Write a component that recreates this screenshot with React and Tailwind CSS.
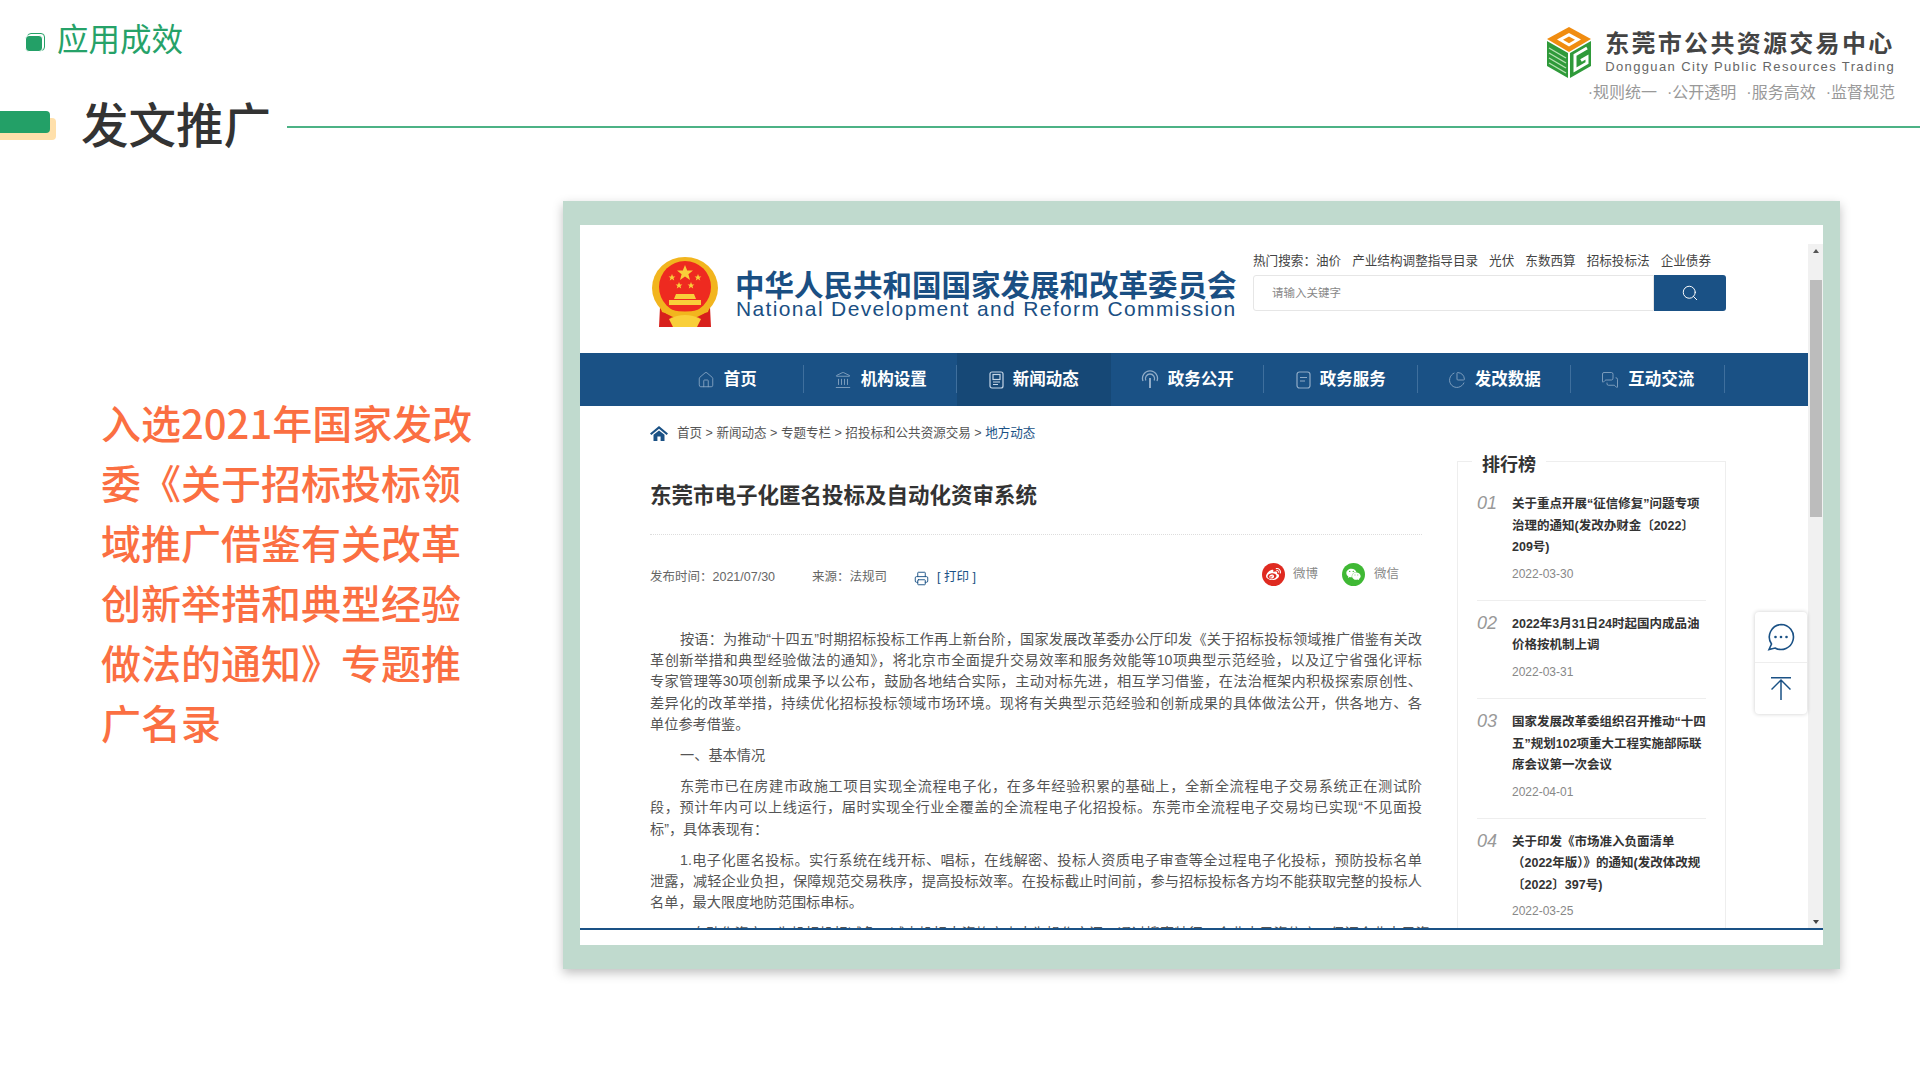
import React from "react";
import { House, Landmark, Printer, Search, PieChart, MessagesSquare } from "lucide-react";
import { FaWeibo, FaWeixin } from "react-icons/fa";

const sans = { fontFamily: '"Liberation Sans", "Noto Sans CJK SC", sans-serif' };
const cjk = { fontFamily: '"Noto Sans CJK SC", sans-serif' };

function CubeLogo() {
  return (
    <svg width="46" height="53" viewBox="0 0 46 53" className="shrink-0">
      <polygon points="23,1 45,13 23,26 1,13" fill="#f08c10" />
      <polygon points="23,7 35,13.5 23,20.5 11,13.5" fill="#fff" />
      <polygon points="23,10.5 29,13.8 23,17.2 17,13.8" fill="#f08c10" />
      <polygon points="1,15 22,27 22,52 1,40" fill="#2f9a3a" />
      <polygon points="45,15 24,27 24,52 45,40" fill="#2f9a3a" />
      <path d="M3 22 L20 32 M3 27 L20 37 M3 32 L20 42 M3 37 L20 47" stroke="#b9e0b4" strokeWidth="1.4" />
      <path d="M41 22 L29 29 V44 L41 37 V31 L35 34.5" fill="none" stroke="#fff" strokeWidth="3" />
    </svg>
  );
}

function Emblem() {
  return (
    <svg width="68" height="72" viewBox="0 0 68 72" className="shrink-0">
      <path d="M9 50 L8 70 L26 70 L30 58 Z M59 50 L60 70 L42 70 L38 58 Z" fill="#d8201c" />
      <ellipse cx="34" cy="31" rx="33" ry="31" fill="#f2b51e" />
      <ellipse cx="34" cy="30" rx="26" ry="26" fill="#ee2a20" />
      <polygon points="34,8 36.2,13.6 42,13.6 37.4,17.2 39,23 34,19.6 29,23 30.6,17.2 26,13.6 31.8,13.6" fill="#f9cf3a" />
      <polygon points="21,17 22,19.4 24.4,19.4 22.5,21 23.2,23.4 21,22 18.8,23.4 19.5,21 17.6,19.4 20,19.4" fill="#f9cf3a" />
      <polygon points="47,17 48,19.4 50.4,19.4 48.5,21 49.2,23.4 47,22 44.8,23.4 45.5,21 43.6,19.4 46,19.4" fill="#f9cf3a" />
      <polygon points="28,25 29,27.4 31.4,27.4 29.5,29 30.2,31.4 28,30 25.8,31.4 26.5,29 24.6,27.4 27,27.4" fill="#f9cf3a" />
      <polygon points="40,25 41,27.4 43.4,27.4 41.5,29 42.2,31.4 40,30 37.8,31.4 38.5,29 36.6,27.4 39,27.4" fill="#f9cf3a" />
      <path d="M25 37 H43 L45 42 H23 Z M18 43 H50 V48 H18 Z" fill="#f9cf3a" />
      <path d="M9 49 Q34 60 59 49 L57 55 Q34 64 11 55 Z" fill="#f2b51e" />
      <path d="M18 62 Q34 54 50 62 L46 70 H22 Z" fill="#f9cf3a" />
    </svg>
  );
}

function NewsIcon() {
  return (
    <svg width="15" height="18" viewBox="0 0 15 18" fill="none" stroke="#c6d6e6" strokeWidth="1.2">
      <rect x="1" y="1" width="13" height="16" rx="2" />
      <rect x="4" y="3.5" width="7" height="5" />
      <path d="M4 11 H11 M4 13.5 H9" />
    </svg>
  );
}

function SignalIcon() {
  return (
    <svg width="18" height="19" viewBox="0 0 18 19" fill="none" stroke="#8fabc7" strokeWidth="1.3">
      <path d="M2 11 A7.5 7.5 0 1 1 16 11" />
      <path d="M4.8 10.5 A4.6 4.6 0 1 1 13.2 10.5" />
      <path d="M9 8 V18" strokeWidth="2" />
    </svg>
  );
}

function DocIcon() {
  return (
    <svg width="15" height="18" viewBox="0 0 15 18" fill="none" stroke="#8fabc7" strokeWidth="1.2">
      <rect x="1" y="1" width="13" height="16" rx="2.5" />
      <path d="M4 6.5 H11 M4 10 H9" />
    </svg>
  );
}

function CrumbHome() {
  return (
    <svg width="18" height="15" viewBox="0 0 18 15" fill="#1a5185" className="mr-[9px]">
      <path d="M9 0 L18 7.5 L16.6 9 L9 2.8 L1.4 9 L0 7.5 Z" />
      <path d="M3.5 8.8 L9 4.4 L14.5 8.8 V15 H10.6 V10.5 H7.4 V15 H3.5 Z" />
    </svg>
  );
}

const navItems = [
  { label: "首页", icon: <House size={18} strokeWidth={1.1} color="#8fabc7" /> },
  { label: "机构设置", icon: <Landmark size={18} strokeWidth={1.1} color="#8fabc7" /> },
  { label: "新闻动态", icon: <NewsIcon />, active: true },
  { label: "政务公开", icon: <SignalIcon /> },
  { label: "政务服务", icon: <DocIcon /> },
  { label: "发改数据", icon: <PieChart size={18} strokeWidth={1.1} color="#8fabc7" /> },
  { label: "互动交流", icon: <MessagesSquare size={18} strokeWidth={1.1} color="#8fabc7" /> },
];

const ranks = [
  { no: "01", lines: ["关于重点开展“征信修复”问题专项", "治理的通知(发改办财金〔2022〕", "209号)"], date: "2022-03-30" },
  { no: "02", lines: ["2022年3月31日24时起国内成品油", "价格按机制上调"], date: "2022-03-31" },
  { no: "03", lines: ["国家发展改革委组织召开推动“十四", "五”规划102项重大工程实施部际联", "席会议第一次会议"], date: "2022-04-01" },
  { no: "04", lines: ["关于印发《市场准入负面清单", "（2022年版）》的通知(发改体改规", "〔2022〕397号)"], date: "2022-03-25" },
];

const intro = [
  "入选2021年国家发改",
  "委《关于招标投标领",
  "域推广借鉴有关改革",
  "创新举措和典型经验",
  "做法的通知》专题推",
  "广名录",
];

// lines broken by hand, the article wraps differently with our fonts
const article = [
  [
    "按语：为推动“十四五”时期招标投标工作再上新台阶，国家发展改革委办公厅印发《关于招标投标领域推广借鉴有关改",
    "革创新举措和典型经验做法的通知》，将北京市全面提升交易效率和服务效能等10项典型示范经验，以及辽宁省强化评标",
    "专家管理等30项创新成果予以公布，鼓励各地结合实际，主动对标先进，相互学习借鉴，在法治框架内积极探索原创性、",
    "差异化的改革举措，持续优化招标投标领域市场环境。现将有关典型示范经验和创新成果的具体做法公开，供各地方、各",
    "单位参考借鉴。",
  ],
  ["一、基本情况"],
  [
    "东莞市已在房建市政施工项目实现全流程电子化，在多年经验积累的基础上，全新全流程电子交易系统正在测试阶",
    "段，预计年内可以上线运行，届时实现全行业全覆盖的全流程电子化招投标。东莞市全流程电子交易均已实现“不见面投",
    "标”，具体表现有：",
  ],
  [
    "1.电子化匿名投标。实行系统在线开标、唱标，在线解密、投标人资质电子审查等全过程电子化投标，预防投标名单",
    "泄露，减轻企业负担，保障规范交易秩序，提高投标效率。在投标截止时间前，参与招标投标各方均不能获取完整的投标人",
    "名单，最大限度地防范围标串标。",
  ],
  ["2.自动化资审。为投标投标减负，减少投标人资格审查人为操作空间，通过搜索特征，企业电子资信库，保证企业电子资"],
];

function Para({ lines }) {
  return (
    <div className="mb-[9.5px]">
      {lines.map((l, i) => (
        <div
          key={l}
          className={`whitespace-nowrap ${i === 0 ? "pl-[30px]" : ""} ${i < lines.length - 1 || lines.length === 1 && l.length > 10 ? "text-justify [text-align-last:justify]" : ""}`}
        >
          {l}
        </div>
      ))}
    </div>
  );
}

function SitePage() {
  return (
    <div className="w-[1228px] shrink-0" style={sans}>
      <div className="h-[128px] pl-[71px] flex">
        <div className="pt-[32px]"><Emblem /></div>
        <div className="ml-[16px] pt-[47px] w-[502px]">
          <div className="text-[29.5px] leading-[28px] font-bold text-[#1a4f83] whitespace-nowrap">中华人民共和国国家发展和改革委员会</div>
          <div className="text-[21px] leading-[18px] font-normal text-[#1a4f83] tracking-[1.36px] whitespace-nowrap pl-[1px]">National Development and Reform Commission</div>
        </div>
        <div className="ml-[16px] pt-[28px]">
          <div className="text-[12.6px] leading-[16px] text-[#444] whitespace-nowrap flex gap-[11px]">
            <span>热门搜索：油价</span><span>产业结构调整指导目录</span><span>光伏</span><span>东数西算</span><span>招标投标法</span><span>企业债券</span>
          </div>
          <div className="mt-[6px] flex w-[473px] h-[36px]">
            <div className="w-[401px] border border-[#e6e6e6] rounded-l-[3px] pl-[18px] text-[11.5px] leading-[34px] text-[#888]">请输入关键字</div>
            <div className="flex-1 bg-[#1a5185] rounded-r-[3px] flex items-center justify-center">
              <Search size={18} strokeWidth={1.3} color="#fff" />
            </div>
          </div>
        </div>
      </div>

      <div className="h-[53px] bg-[#1a5185] pl-[70px] flex items-center">
        {navItems.map(n => (
          <div key={n.label} className={`w-[153.5px] h-full flex items-center justify-center gap-[9px] relative ${n.active ? "bg-[#164876]" : ""}`}>
            {n.icon}
            <span className="text-[16.5px] font-bold text-white">{n.label}</span>
            {!n.active && <span className="absolute right-0 top-[12px] h-[28px] w-px bg-[#3f6f9d]" />}
          </div>
        ))}
      </div>

      <div className="pl-[70px] flex">
        <div className="w-[772px] shrink-0">
          <div className="mt-[18px] h-[18px] flex items-center text-[12.55px] text-[#555] whitespace-nowrap">
            <CrumbHome />
            <span>首页 &gt; 新闻动态 &gt; 专题专栏 &gt; 招投标和公共资源交易 &gt; <span className="text-[#1a5185]">地方动态</span></span>
          </div>
          <h2 className="mt-[38.5px] text-[21.5px] leading-[30px] font-bold text-[#333] whitespace-nowrap">东莞市电子化匿名投标及自动化资审系统</h2>
          <div className="mt-[23px] border-t border-dotted border-[#ddd]" />
          <div className="mt-[30px] h-[26px] flex items-center text-[12.5px] text-[#666] whitespace-nowrap">
            <span className="w-[162px]">发布时间：2021/07/30</span>
            <span className="w-[102px]">来源：法规司</span>
            <Printer size={15} strokeWidth={1.5} color="#1a5185" className="mt-[1px]" />
            <span className="ml-[8px] text-[#1a5185]">[ 打印 ]</span>
            <div className="ml-auto flex items-center pr-[23px] -mt-[6px]">
              <span className="w-[23px] h-[23px] rounded-full bg-[#df2a20] flex items-center justify-center"><FaWeibo size={15} color="#fff" /></span>
              <span className="ml-[8px] w-[49px] text-[#888]">微博</span>
              <span className="w-[23px] h-[23px] rounded-full bg-[#3fb834] flex items-center justify-center"><FaWeixin size={15} color="#fff" /></span>
              <span className="ml-[9px] text-[#888]">微信</span>
            </div>
          </div>
          <div className="mt-[38px] text-[14.2px] leading-[21.4px] text-[#555]">
            {article.map((lines, i) => <Para key={i} lines={lines} />)}
          </div>
        </div>

        <div className="ml-[35px] w-[269px] shrink-0 h-[600px] mt-[55px] border border-[#eee] relative">
          <div className="absolute left-[14px] -top-[11px] bg-white px-[10px] text-[18px] leading-[28px] font-bold text-[#333] whitespace-nowrap">排行榜</div>
          <div className="px-[19px] pt-[32px]">
            {ranks.map((r, i) => (
              <div key={r.no} className={`flex ${i < 3 ? "border-b border-[#eee] mb-[13px] pb-[14.8px]" : ""}`}>
                <div className="w-[35px] shrink-0 text-[18px] leading-[19.5px] italic text-[#999]">{r.no}</div>
                <div>
                  {r.lines.map(l => (
                    <div key={l} className="text-[12.5px] leading-[21.5px] font-bold text-[#333] whitespace-nowrap">{l}</div>
                  ))}
                  <div className="mt-[5px] text-[12px] leading-[21.5px] text-[#888]">{r.date}</div>
                </div>
              </div>
            ))}
          </div>
        </div>
      </div>
    </div>
  );
}

function Scrollbar() {
  return (
    <div className="w-[15px] shrink-0 mt-[19px] bg-[#f1f1f1] flex flex-col items-center">
      <div className="mt-[5px] w-0 h-0 border-x-[3.5px] border-x-transparent border-b-[4px] border-b-[#555]" />
      <div className="mt-[27px] w-[12px] h-[237px] bg-[#bcbcbc]" />
      <div className="mt-auto mb-[4px] w-0 h-0 border-x-[3.5px] border-x-transparent border-t-[4px] border-t-[#444]" />
    </div>
  );
}

export default function App() {
  return (
    <div className="w-[1920px] h-[1080px] bg-white overflow-hidden flex flex-col" style={sans}>
      <div className="h-[100px] flex justify-between shrink-0">
        <div className="pl-[25px] pt-[16px] flex items-start">
          <div className="relative mt-[18px] w-[19px] h-[19px]">
            <span className="absolute left-[2px] -top-[1px] w-[18px] h-[18px] rounded-[4px] border border-[#26a269]" />
            <span className="absolute left-0 top-[1px] w-[18px] h-[17px] rounded-[4px] bg-[#23a067] border border-white" />
          </div>
          <div className="ml-[13px] text-[31.5px] leading-[42px] font-normal text-[#26a269] whitespace-nowrap" style={cjk}>应用成效</div>
        </div>
        <div className="pr-[25px] pt-[26px] flex flex-col items-end">
          <div className="flex">
            <div className="mr-[13px]"><CubeLogo /></div>
            <div>
              <div className="text-[24px] leading-[30px] mt-[3px] font-bold text-[#444] tracking-[2.3px] whitespace-nowrap">东莞市公共资源交易中心</div>
              <div className="text-[13px] leading-[18px] -mt-[1px] text-[#666] tracking-[1.37px] whitespace-nowrap">Dongguan City Public Resources Trading</div>
            </div>
          </div>
          <div className="mt-[2px] flex gap-[10px] text-[16px] leading-[24px] text-[#999] whitespace-nowrap">
            <span>·规则统一</span><span>·公开透明</span><span>·服务高效</span><span>·监督规范</span>
          </div>
        </div>
      </div>

      <div className="h-[50px] flex items-center shrink-0">
        <div className="relative w-[56px] h-[29px] self-center">
          <span className="absolute left-0 top-[7px] w-[56px] h-[22px] rounded-r-[4px] bg-[#ffe0ab]" />
          <span className="absolute left-0 top-0 w-[50px] h-[22px] rounded-r-[4px] bg-[#23a067]" />
        </div>
        <div className="ml-[25px] pb-[4px] text-[47.5px] leading-[50px] font-medium text-[#333] whitespace-nowrap" style={cjk}>发文推广</div>
        <div className="ml-[16px] flex-1 h-[2px] bg-[#4cb285] mt-[4px]" />
      </div>

      <div className="flex mt-[51px]">
        <div className="w-[563px] shrink-0 pl-[101px] pt-[191px]">
          <div className="text-[40px] leading-[60px] font-medium text-[#fb6f42] whitespace-nowrap" style={cjk}>
            {intro.map(l => <div key={l}>{l}</div>)}
          </div>
        </div>

        <div className="w-[1277px] h-[768px] bg-[#c0dace] pl-[17px] pt-[24px] shadow-[0_4px_10px_rgba(0,0,0,0.25)]">
          <div className="w-[1243px] h-[720px] bg-white">
            <div className="h-[705px] border-b-2 border-[#1a5185] overflow-hidden flex relative">
              <SitePage />
              <Scrollbar />
              <div className="absolute left-[1175px] top-[387px] w-[52px] h-[102px] bg-white rounded-[4px] shadow-[0_0_4px_rgba(0,0,0,0.2)] flex flex-col">
                <div className="h-[51px] border-b border-[#eee] flex items-center justify-center">
                  <svg width="28" height="28" viewBox="0 0 28 28" fill="none" stroke="#1a5185" strokeWidth="1.6">
                    <path d="M14 1.5 A12.5 12.5 0 1 1 8 25 L2 26.5 L4.5 21 A12.5 12.5 0 0 1 14 1.5 Z" />
                    <circle cx="8.5" cy="14" r="1.3" fill="#1a5185" stroke="none" />
                    <circle cx="14" cy="14" r="1.3" fill="#1a5185" stroke="none" />
                    <circle cx="19.5" cy="14" r="1.3" fill="#1a5185" stroke="none" />
                  </svg>
                </div>
                <div className="flex-1 flex items-center justify-center">
                  <svg width="20" height="23" viewBox="0 0 20 23" fill="none" stroke="#1a5185" strokeWidth="1.5">
                    <path d="M0 .75 H20 M10 23 V3 M.5 12.5 L10 3 L19.5 12.5" />
                  </svg>
                </div>
              </div>
            </div>
          </div>
        </div>
      </div>
    </div>
  );
}
